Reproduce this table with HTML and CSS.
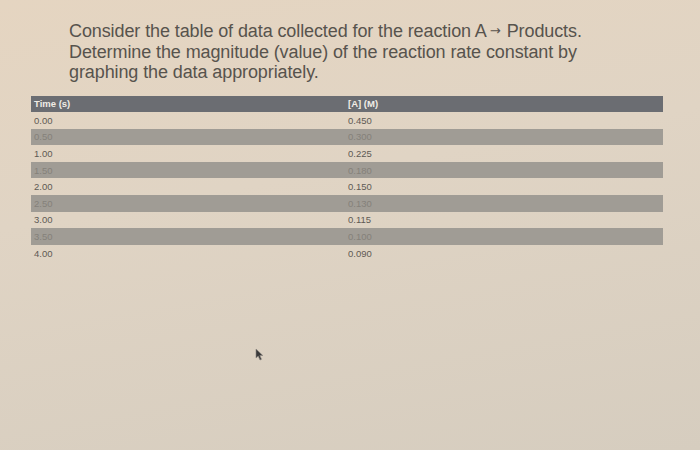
FILE: index.html
```html
<!DOCTYPE html>
<html>
<head>
<meta charset="utf-8">
<link rel="stylesheet" href="styles.css">
</head>
<body>
<div class="page">
  <p class="question">Consider the table of data collected for the reaction A<span class="arrow">→</span>Products. Determine the magnitude (value) of the reaction rate constant by graphing the data appropriately.</p>
  <table class="data">
    <thead>
      <tr><th class="c1">Time (s)</th><th class="c2">[A] (M)</th></tr>
    </thead>
    <tbody>
      <tr><td class="c1">0.00</td><td class="c2">0.450</td></tr>
      <tr class="alt"><td class="c1">0.50</td><td class="c2">0.300</td></tr>
      <tr><td class="c1">1.00</td><td class="c2">0.225</td></tr>
      <tr class="alt"><td class="c1">1.50</td><td class="c2">0.180</td></tr>
      <tr><td class="c1">2.00</td><td class="c2">0.150</td></tr>
      <tr class="alt"><td class="c1">2.50</td><td class="c2">0.130</td></tr>
      <tr><td class="c1">3.00</td><td class="c2">0.115</td></tr>
      <tr class="alt"><td class="c1">3.50</td><td class="c2">0.100</td></tr>
      <tr><td class="c1">4.00</td><td class="c2">0.090</td></tr>
    </tbody>
  </table>
  <svg class="cursor" width="9" height="13" viewBox="0 0 9 13"><path d="M1 1 L1 10 L3.2 8 L5 12 L6.5 11.3 L4.8 7.5 L7.8 7.5 Z" fill="#3a3a3a" stroke="#8a8580" stroke-width="0.6"/></svg>
</div>
</body>
</html>
```
FILE: styles.css
```css
html, body {
  margin: 0;
  padding: 0;
}
body {
  width: 700px;
  height: 450px;
  overflow: hidden;
  background: linear-gradient(170deg, #e5d5c1 0%, #e0d4c4 40%, #d6cdbf 100%);
  font-family: "Liberation Sans", Arial, sans-serif;
}
.page {
  position: relative;
  width: 700px;
  height: 450px;
  padding: 21px 0 0 0;
  box-sizing: border-box;
}
.question {
  margin: 0 0 0 69px;
  width: 540px;
  font-size: 18px;
  line-height: 20.5px;
  color: #57534d;
  letter-spacing: -0.1px;
}
.arrow {
  font-family: "DejaVu Sans", sans-serif;
  font-size: 13px;
  letter-spacing: 0;
  padding: 0 6px 0 3px;
  vertical-align: 2px;
}
.data {
  margin: 13px 0 0 31px;
  width: 632px;
  border-collapse: collapse;
  font-size: 9.5px;
}
.data th, .data td {
  height: 16.6px;
  padding: 0 0 0 3px;
  text-align: left;
  vertical-align: middle;
}
.data th {
  background: #6b6d72;
  color: #f0ece6;
  font-weight: bold;
}
.data td {
  color: #5e5a54;
}
.data .c1 {
  width: 311px;
}
.data .alt td {
  background: #a09c95;
  color: #85817a;
}
.cursor {
  position: absolute;
  left: 255px;
  top: 348px;
}
```
